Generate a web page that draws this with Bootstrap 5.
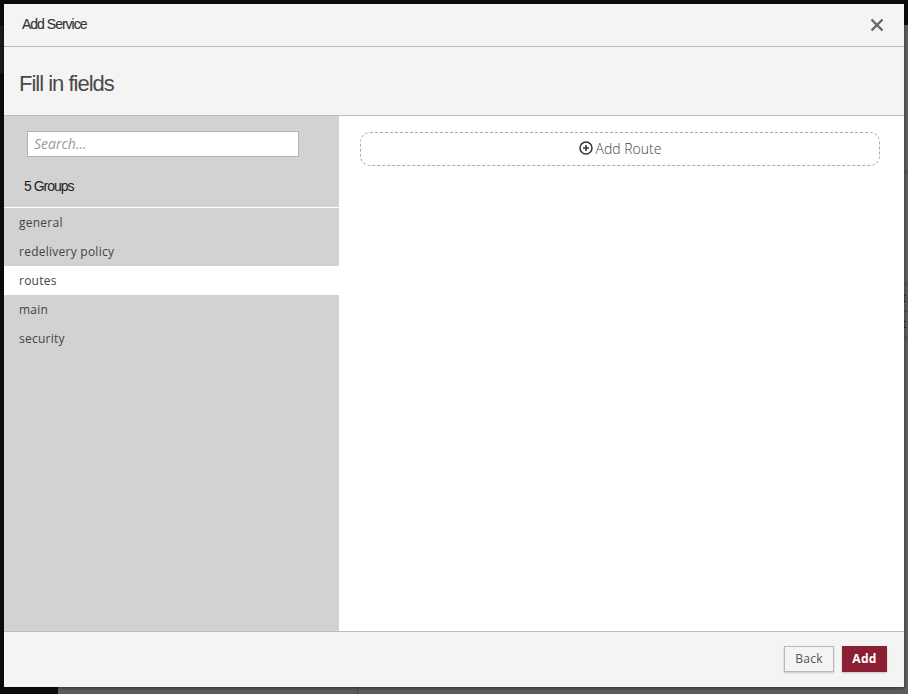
<!DOCTYPE html>
<html lang="en">
<head>
<meta charset="utf-8">
<title>Add Service</title>
<link href="https://cdn.jsdelivr.net/npm/bootstrap@5.3.0/dist/css/bootstrap.min.css" rel="stylesheet">
<style>
html,body{height:100%}
body{margin:0;overflow:hidden;background:#0a0c0d;font-family:"Open Sans",sans-serif;color:#333;position:relative}
.scene-back{position:absolute;inset:25px 0 0 58px;background-color:#5c5c5c;background-image:linear-gradient(#4c4c4c,#4c4c4c),linear-gradient(#4c4c4c,#4c4c4c),linear-gradient(#4c4c4c,#4c4c4c),linear-gradient(#4c4c4c,#4c4c4c);background-repeat:no-repeat;background-size:100% 1px;background-position:0 147px,0 259px,0 286px,0 312px}
.scene-strip{position:absolute;left:0;top:25px;width:4px;height:48px;background:#1b1b1b}
.scene-line{position:absolute;left:357px;bottom:0;width:1px;height:7px;background:#444}
.scene-mark{position:absolute;left:902px;font-size:12px;line-height:12px;color:#1c1f24}
.mark-a{top:292px}
.mark-b{top:318px}
.dlg{position:absolute;left:4px;top:4px;width:900px;height:683px;background:#f4f4f4;box-shadow:0 1px 3px rgba(0,0,0,.5)}
.dlg-head{height:43px;border-bottom:1px solid #bbb;padding:0 21px 0 18px}
.dlg-name{font-family:"Liberation Sans",sans-serif;font-size:14px;letter-spacing:-1px;color:#333;margin:0 0 2px;font-weight:400;-webkit-text-stroke:.15px #333}
.dlg-close{width:14px;height:14px;padding:0;border:0;background:none;line-height:0;margin-right:-1px}
.dlg-sub{height:69px;border-bottom:1px solid #bbb;padding:6px 15px 0}
.dlg-sub h1{font-family:"Liberation Sans",sans-serif;font-size:22px;font-weight:400;letter-spacing:-1px;color:#4a4a4a;margin:0}
.dlg-main{height:515px}
.side{width:335px;background:#d2d2d2;flex:none}
.side-search{padding:15px 40px 0 23px}
.side-input{display:block;width:272px;height:26px;border:1px solid #b4b4b4;border-radius:0;background:#fff;padding:0 6px 2px;font:italic 14px "Open Sans",sans-serif;color:#333;outline:0}
.side-input::placeholder{color:#999;opacity:1}
.side-count{height:51px;padding:8px 0 0 20px;border-bottom:1px solid #fff;font-family:"Liberation Sans",sans-serif;font-size:14px;letter-spacing:-1px;color:#222;display:flex;align-items:center}
.side-menu a{display:block;height:29px;line-height:29px;padding-left:15px;font-size:12px;letter-spacing:.25px;color:#444;text-decoration:none}
.side-menu a.on{background:#fff}
.pane{background:#fff;padding:16px 24px 0 21px}
.add-box{height:34px;width:520px;border:1px dashed #aaa;border-radius:10px;background:#fff;color:#444;font-size:14px;font-weight:300;gap:3px;padding:0 0 2px}
.dlg-foot{height:56px;border-top:1px solid #bbb;padding:0 17px 2px 0;gap:8px}
.act{height:26px;border-radius:0;font-size:12px;letter-spacing:.3px;padding:0;box-shadow:0 1px 2px rgba(0,0,0,.2)}
.act-back{width:50px;background:#f4f4f4;border:1px solid #b9b9b9;color:#555;font-weight:500}
.act-add{width:45px;background:#8b2035;border:1px solid #8b2035;color:#fff;font-weight:700}
.act-add:hover{background:#8b2035;color:#fff}
</style>
</head>
<body>
<div class="scene-back"></div>
<div class="scene-strip"></div>
<div class="scene-line"></div>
<span class="scene-mark mark-a">t</span>
<span class="scene-mark mark-b">t</span>
<div class="dlg d-flex flex-column">
  <div class="dlg-head d-flex align-items-center justify-content-between">
    <h5 class="dlg-name">Add Service</h5>
    <button class="dlg-close" type="button" aria-label="Close">
      <svg width="14" height="14" viewBox="0 0 14 14"><path d="M1.5 1.5 12.500 12.500M12.500 1.500 1.500 12.500" stroke="#666" stroke-width="2.400" fill="none"/></svg>
    </button>
  </div>
  <div class="dlg-sub d-flex align-items-center"><h1>Fill in fields</h1></div>
  <div class="dlg-main d-flex">
    <div class="side">
      <div class="side-search"><input class="side-input" type="text" placeholder="Search..."></div>
      <div class="side-count">5 Groups</div>
      <nav class="side-menu">
        <a href="#">general</a>
        <a href="#">redelivery policy</a>
        <a href="#" class="on">routes</a>
        <a href="#">main</a>
        <a href="#">security</a>
      </nav>
    </div>
    <div class="pane flex-grow-1">
      <button class="add-box btn d-flex align-items-center justify-content-center" type="button">
        <svg width="14" height="14" viewBox="0 0 14 14"><circle cx="7" cy="7" r="6" fill="none" stroke="#333" stroke-width="1.500"/><path d="M7 4v6M4 7h6" stroke="#333" stroke-width="1.600"/></svg>
        <span>Add Route</span>
      </button>
    </div>
  </div>
  <div class="dlg-foot d-flex align-items-center justify-content-end">
    <button class="btn act act-back" type="button">Back</button>
    <button class="btn act act-add" type="button">Add</button>
  </div>
</div>
<script src="https://cdn.jsdelivr.net/npm/bootstrap@5.3.0/dist/js/bootstrap.bundle.min.js"></script>
</body>
</html>
